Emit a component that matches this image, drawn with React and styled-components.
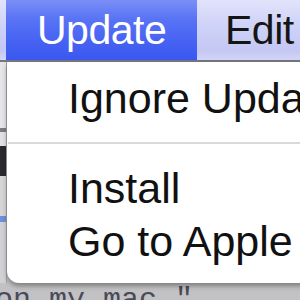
import styled, { createGlobalStyle } from "styled-components";

const GlobalStyle = createGlobalStyle`
  html, body {
    margin: 0;
    padding: 0;
    width: 300px;
    height: 300px;
    overflow: hidden;
    background: #c2c2c4;
  }
`;

const App = () => {
  return (
    <>
      <GlobalStyle />
      <Screen>
        <MenuBar>
          <MenuTitle $active>Update</MenuTitle>
          <MenuTitle>Edit</MenuTitle>
        </MenuBar>
        <Body>
          <LeftStrip>
            <StripPart $h={66} $bg="#e6e6e8" />
            <StripPart $h={4} $bg="#7c7c80" />
            <StripPart $h={14} $bg="#e2e2e4" />
            <StripPart $h={30} $bg="#2a2a2c" />
            <StripPart $h={40} $bg="#d6d6d8" />
            <StripPart $h={6} $bg="#6f8fd8" />
            <StripPart $h={61} $bg="#d2d2d4" />
          </LeftStrip>
          <Panel>
            <Item $top={10}>Ignore Update</Item>
            <Separator />
            <Item>Install</Item>
            <Item>Go to Apple Website</Item>
          </Panel>
        </Body>
        <BackText>on my mac."</BackText>
      </Screen>
    </>
  );
};

const Screen = styled.div`
  width: 300px;
  height: 300px;
  display: flex;
  flex-direction: column;
  overflow: hidden;
  font-family: "Liberation Sans", Arial, sans-serif;
`;

const MenuBar = styled.div`
  height: 60px;
  flex-shrink: 0;
  display: flex;
  padding-left: 6px;
  background: linear-gradient(#e2e3fb 0%, #d0d3f8 40%, #c3c7f3 85%, #d4d6f6 100%);
  border-bottom: 2px solid #76767e;
`;

const MenuTitle = styled.div`
  font-size: 41px;
  line-height: 60px;
  white-space: nowrap;
  ${({ $active }) =>
    $active
      ? `
    width: 160px;
    padding-left: 31px;
    color: #ffffff;
    letter-spacing: -0.5px;
    background: linear-gradient(#7c8ff7 0%, #5a74f5 30%, #4562f3 70%, #3a58ef 100%);
  `
      : `
    padding-left: 28px;
    color: #151515;
    letter-spacing: -0.5px;
  `}
`;

const Body = styled.div`
  display: flex;
  height: 221px;
  flex-shrink: 0;
`;

const LeftStrip = styled.div`
  width: 6px;
  flex-shrink: 0;
  display: flex;
  flex-direction: column;
  border-right: 1px solid #a4a4a8;
`;

const StripPart = styled.div`
  height: ${({ $h }) => $h}px;
  background: ${({ $bg }) => $bg};
`;

const Panel = styled.div`
  flex: 1;
  background: #ffffff;
  border-bottom-left-radius: 12px;
  box-shadow: 0 3px 5px rgba(0, 0, 0, 0.35);
  position: relative;
  z-index: 1;
`;

const Item = styled.div`
  font-size: 43px;
  line-height: 53px;
  padding-left: 61px;
  padding-top: ${({ $top }) => $top || 0}px;
  color: #111111;
  white-space: nowrap;
`;

const Separator = styled.div`
  height: 2px;
  margin: 17px 0 18px 1px;
  background: #d9d9d9;
`;

const BackText = styled.div`
  font-family: "Liberation Mono", "Courier New", monospace;
  font-size: 30px;
  line-height: 26px;
  padding-top: 4px;
  margin-left: -5px;
  color: #4a4a58;
  white-space: nowrap;
`;

export default App;
